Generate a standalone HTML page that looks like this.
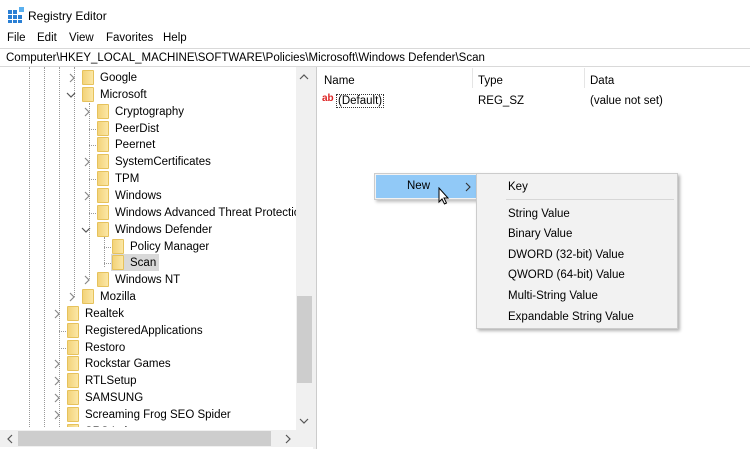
<!DOCTYPE html>
<html><head><style>
*{margin:0;padding:0;box-sizing:border-box}
body{width:750px;height:449px;overflow:hidden;background:#fff;font-family:"Liberation Sans",sans-serif;font-size:11.5px;color:#000;position:relative}
.a{position:absolute;white-space:nowrap}
.f{position:absolute;width:12px;height:15px;background:linear-gradient(90deg,#f3d37a,#fbe7a6);border:1px solid #e6c25c;border-radius:1px}
.ex{position:absolute}
.vl{position:absolute;border-left:1px dotted #999;width:0}
.hl{position:absolute;border-top:1px dotted #999;height:0}
.mi{position:absolute;left:508px}
</style></head><body>
<svg class="a" style="left:8px;top:7px" width="16" height="16"><rect x="0" y="3" width="4" height="4" fill="#2a7fd4"/><rect x="5" y="3" width="4" height="4" fill="#2a7fd4"/><rect x="0" y="8" width="4" height="4" fill="#2a7fd4"/><rect x="5" y="8" width="4" height="4" fill="#2a7fd4"/><rect x="10" y="8" width="4" height="4" fill="#2a7fd4"/><rect x="0" y="13" width="4" height="3" fill="#2a7fd4"/><rect x="5" y="13" width="4" height="3" fill="#2a7fd4"/><rect x="10" y="13" width="4" height="3" fill="#2a7fd4"/><rect x="11" y="0" width="5" height="5" fill="#5ab0ef"/></svg>
<div class="a" style="left:28px;top:9px;font-size:12px">Registry Editor</div>
<div class="a" style="left:7px;top:32px">File</div>
<div class="a" style="left:37px;top:32px">Edit</div>
<div class="a" style="left:69px;top:32px">View</div>
<div class="a" style="left:106px;top:32px">Favorites</div>
<div class="a" style="left:163px;top:32px">Help</div>
<div class="a" style="left:0;top:48px;width:750px;height:19px;border:1px solid #d9d9d9;border-left:none;border-right:none"></div>
<div class="a" style="left:6px;top:52px">Computer\HKEY_LOCAL_MACHINE\SOFTWARE\Policies\Microsoft\Windows Defender\Scan</div>
<div class="a" style="left:0;top:67px;width:313px;height:382px;border-right:1px solid #ccc;overflow:hidden">
<div class="vl" style="left:29px;top:0;height:380px"></div>
<div class="vl" style="left:44px;top:0;height:380px"></div>
<div class="vl" style="left:59px;top:0;height:362px"></div>
<div class="vl" style="left:74px;top:0;height:230px"></div>
<div class="vl" style="left:89px;top:36px;height:176px"></div>
<div class="vl" style="left:104px;top:170px;height:30px"></div>
</div>
<div id="tree"></div>
<script>
var r=[[1,'>','Google'],[1,'v','Microsoft'],[2,'>','Cryptography'],[2,'','PeerDist'],[2,'','Peernet'],[2,'>','SystemCertificates'],[2,'','TPM'],[2,'>','Windows'],[2,'','Windows Advanced Threat Protectio'],[2,'v','Windows Defender'],[3,'','Policy Manager'],[3,'','Scan'],[2,'>','Windows NT'],[1,'>','Mozilla'],[0,'>','Realtek'],[0,'','RegisteredApplications'],[0,'','Restoro'],[0,'>','Rockstar Games'],[0,'>','RTLSetup'],[0,'>','SAMSUNG'],[0,'>','Screaming Frog SEO Spider'],[0,'>','SRS Labs']];
var h='';
r.forEach(function(e,i){var y=70+i*16.85,x=67+e[0]*15;
if(e[1]=='>')h+='<svg class="ex" style="left:'+(x-15)+'px;top:'+(y+3)+'px" width="10" height="10"><path d="M3 1 L7 5 L3 9" fill="none" stroke="#888" stroke-width="1.2"/></svg>';
else if(e[1]=='v')h+='<svg class="ex" style="left:'+(x-16)+'px;top:'+(y+3)+'px" width="10" height="10"><path d="M1 3 L5 7 L9 3" fill="none" stroke="#555" stroke-width="1.2"/></svg>';
else h+='<div class="hl" style="left:'+(x-8)+'px;top:'+(y+8)+'px;width:7px"></div>';
if(e[2]=='Scan')h+='<div class="a" style="left:'+(x-1)+'px;top:'+(y-1)+'px;width:48px;height:17px;background:#d9d9d9"></div>';
h+='<div class="f" style="left:'+x+'px;top:'+y+'px"></div><div class="a" style="left:'+(x+18)+'px;top:'+(y+2)+'px">'+e[2]+'</div>';});
document.getElementById('tree').innerHTML=h;
</script>
<div class="a" style="left:0;top:427px;width:313px;height:22px;background:#fff"></div>
<div class="a" style="left:296px;top:67px;width:17px;height:363px;background:#f0f0f0"></div>
<div class="a" style="left:297px;top:296px;width:15px;height:87px;background:#cdcdcd"></div>
<svg class="a" style="left:299px;top:73px" width="10" height="8"><path d="M1 6 L5 2 L9 6" fill="none" stroke="#555" stroke-width="1.2"/></svg>
<svg class="a" style="left:299px;top:417px" width="10" height="8"><path d="M1 2 L5 6 L9 2" fill="none" stroke="#555" stroke-width="1.2"/></svg>
<div class="a" style="left:0;top:430px;width:313px;height:17px;background:#f0f0f0"></div>
<div class="a" style="left:18px;top:431px;width:253px;height:15px;background:#cdcdcd"></div>
<svg class="a" style="left:6px;top:434px" width="8" height="10"><path d="M6 1 L2 5 L6 9" fill="none" stroke="#555" stroke-width="1.2"/></svg>
<svg class="a" style="left:284px;top:434px" width="8" height="10"><path d="M2 1 L6 5 L2 9" fill="none" stroke="#555" stroke-width="1.2"/></svg>
<div class="a" style="left:313px;top:67px;width:4px;height:382px;background:#f0f0f0;border-right:1px solid #ccc"></div>
<div class="a" style="left:324px;top:75px">Name</div>
<div class="a" style="left:472px;top:68px;height:20px;border-left:1px solid #e5e5e5"></div>
<div class="a" style="left:478px;top:75px">Type</div>
<div class="a" style="left:584px;top:68px;height:20px;border-left:1px solid #e5e5e5"></div>
<div class="a" style="left:590px;top:75px">Data</div>
<div class="a" style="left:322px;top:93px;font-size:10px;font-weight:bold;color:#d22;">ab</div>
<div class="a" style="left:336px;top:94px;padding:0 1px;border:1px dotted #333">(Default)</div>
<div class="a" style="left:478px;top:95px">REG_SZ</div>
<div class="a" style="left:590px;top:95px">(value not set)</div>
<div class="a" style="left:374px;top:173px;width:104px;height:27px;background:#f2f2f2;border:1px solid #ccc;box-shadow:2px 2px 3px rgba(0,0,0,.25)"></div>
<div class="a" style="left:376px;top:175px;width:100px;height:23px;background:#91c9f7"></div>
<div class="a" style="left:407px;top:180px">New</div>
<svg class="a" style="left:464px;top:182px" width="8" height="10"><path d="M2 1 L6 5 L2 9" fill="none" stroke="#333" stroke-width="1.1"/></svg>
<div class="a" style="left:476px;top:173px;width:202px;height:156px;background:#f2f2f2;border:1px solid #ccc;box-shadow:2px 2px 3px rgba(0,0,0,.3)"></div>
<div class="a" style="left:506px;top:199px;width:168px;border-top:1px solid #d7d7d7"></div>
<div class="mi" style="top:181px">Key</div>
<div class="mi" style="top:208px">String Value</div>
<div class="mi" style="top:228px">Binary Value</div>
<div class="mi" style="top:249px">DWORD (32-bit) Value</div>
<div class="mi" style="top:269px">QWORD (64-bit) Value</div>
<div class="mi" style="top:290px">Multi-String Value</div>
<div class="mi" style="top:311px">Expandable String Value</div>
<svg class="a" style="left:438px;top:187px" width="12" height="19"><path d="M1 1 L1 15 L4 12 L6.5 17 L8.5 16 L6 11 L10 11 Z" fill="#fff" stroke="#000" stroke-width="1"/></svg>
</body></html>
